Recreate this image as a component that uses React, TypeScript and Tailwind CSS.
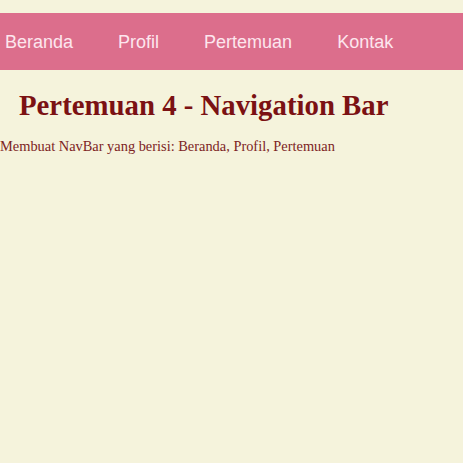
export default function App() {
  const links = ["Beranda", "Profil", "Pertemuan", "Kontak"];
  return (
    <div className="w-[463px] h-[463px] bg-[#f5f3dc] overflow-hidden pt-[13px]">
      <nav className="h-[57px] bg-[#dc6e8c] flex items-center pl-[5px] gap-[45px]">
        {links.map((l) => (
          <a
            key={l}
            className="text-[18px] leading-none text-[#fde6ee] font-['Liberation_Sans',Arial,sans-serif]"
          >
            {l}
          </a>
        ))}
      </nav>
      <h1 className="mt-[21px] pl-[19px] text-[28.8px] leading-none font-bold text-[#7b1113] font-['Liberation_Serif','Times_New_Roman',serif] whitespace-nowrap">
        Pertemuan 4 - Navigation Bar
      </h1>
      <p className="mt-[19px] text-[14.4px] leading-none text-[#7d2424] font-['Liberation_Serif','Times_New_Roman',serif] whitespace-nowrap">
        Membuat NavBar yang berisi: Beranda, Profil, Pertemuan
      </p>
    </div>
  );
}
